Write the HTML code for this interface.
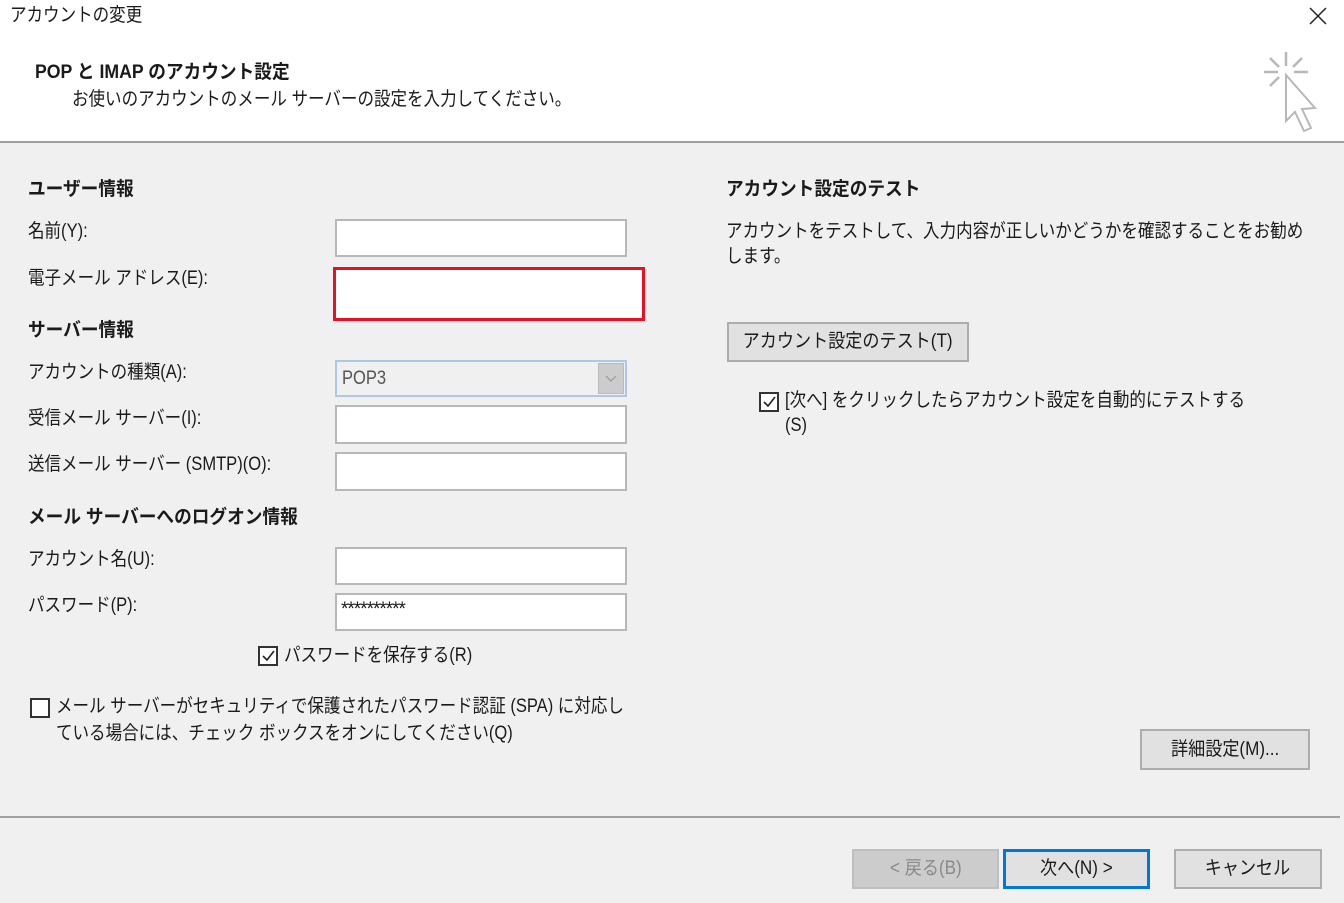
<!DOCTYPE html><html><head><meta charset="utf-8"><style>
body{margin:0;width:1344px;height:903px;background:#f0f0f0;position:relative;overflow:hidden;font-family:"Liberation Sans","Noto Sans CJK JP",sans-serif;color:#1a1a1a;font-size:19px}
.a{position:absolute;white-space:nowrap;line-height:24px;transform:scaleX(0.87);transform-origin:0 0}
.b{font-weight:bold;transform:scaleX(0.93)}
.in{position:absolute;background:#fff;border:2px solid #b8b8b8;box-sizing:border-box;left:335px;width:292px}
.btn{position:absolute;background:#e1e1e1;border:2px solid #adadad;box-sizing:border-box;text-align:center;font-size:19px}
.btn span{display:inline-block;transform:scaleX(0.9)}
.cb{position:absolute;width:20px;height:20px;border:2px solid #333;box-sizing:border-box;background:#fff}
</style></head><body>
<div style="position:absolute;left:0;top:0;width:1344px;height:141px;background:#fff"></div>
<div style="position:absolute;left:0;top:141px;width:1344px;height:2px;background:#a0a0a0"></div>
<div class="a" style="left:10px;top:4px">アカウントの変更</div>
<svg style="position:absolute;left:1309px;top:7px" width="18" height="18" stroke="#222" stroke-width="1.5"><path d="M1 1L17 17M17 1L1 17"/></svg>
<div class="a b" style="left:35px;top:61px">POP と IMAP のアカウント設定</div>
<div class="a" style="left:72px;top:88px">お使いのアカウントのメール サーバーの設定を入力してください。</div>
<svg style="position:absolute;left:1260px;top:50px" width="64" height="90" viewBox="0 0 64 90" fill="none" stroke="#b8b8b8" stroke-width="2.5"><path d="M26 2v14M4 22h14M34 22h14M10 8l9 9M42 8l-9 9M10 36l9-9"/><path d="M26 25v46l9-9 9 19 7-3-9-19 13-1z" stroke-width="2"/></svg>
<div class="a b" style="left:28px;top:178px">ユーザー情報</div>
<div class="a" style="left:28px;top:220px">名前(Y):</div>
<div class="a" style="left:28px;top:267px">電子メール アドレス(E):</div>
<div class="a b" style="left:28px;top:319px">サーバー情報</div>
<div class="a" style="left:28px;top:361px">アカウントの種類(A):</div>
<div class="a" style="left:28px;top:407px">受信メール サーバー(I):</div>
<div class="a" style="left:28px;top:453px">送信メール サーバー (SMTP)(O):</div>
<div class="a b" style="left:28px;top:506px">メール サーバーへのログオン情報</div>
<div class="a" style="left:28px;top:548px">アカウント名(U):</div>
<div class="a" style="left:28px;top:594px">パスワード(P):</div>
<div class="in" style="top:219px;height:38px"></div>
<div style="position:absolute;left:333px;top:267px;width:312px;height:54px;border:3px solid #e81123;box-sizing:border-box;background:#fff"></div>
<div class="in" style="top:360px;height:37px;background:#f0f0f0;border-color:#adc8e6"><span class="a" style="left:5px;top:5px;color:#555">POP3</span><div style="position:absolute;right:1px;top:1px;width:26px;height:31px;background:#ccc;border:1px solid #bbb;box-sizing:border-box"><svg width="24" height="29"><path d="M7 12l5 5 5-5" fill="none" stroke="#999" stroke-width="1.2"/></svg></div></div>
<div class="in" style="top:405px;height:39px"></div>
<div class="in" style="top:452px;height:39px"></div>
<div class="in" style="top:547px;height:38px"></div>
<div class="in" style="top:593px;height:38px"><span class="a" style="left:4px;top:3px;font-size:19px;transform:none;letter-spacing:-1px">**********</span></div>
<div class="cb" style="left:258px;top:646px"><svg width="16" height="16" style="position:absolute;left:0;top:0"><path d="M3 8l4 4 7-9" fill="none" stroke="#222" stroke-width="1.6"/></svg></div>
<div class="a" style="left:284px;top:644px">パスワードを保存する(R)</div>
<div class="cb" style="left:30px;top:698px"></div>
<div class="a" style="left:56px;top:695px">メール サーバーがセキュリティで保護されたパスワード認証 (SPA) に対応し</div>
<div class="a" style="left:56px;top:722px">ている場合には、チェック ボックスをオンにしてください(Q)</div>
<div class="a b" style="left:726px;top:178px">アカウント設定のテスト</div>
<div class="a" style="left:726px;top:220px">アカウントをテストして、入力内容が正しいかどうかを確認することをお勧め</div>
<div class="a" style="left:726px;top:245px">します。</div>
<div class="btn" style="left:727px;top:322px;width:242px;height:40px;line-height:36px"><span>アカウント設定のテスト(T)</span></div>
<div class="cb" style="left:759px;top:392px"><svg width="16" height="16" style="position:absolute;left:0;top:0"><path d="M3 8l4 4 7-9" fill="none" stroke="#222" stroke-width="1.6"/></svg></div>
<div class="a" style="left:785px;top:389px">[次へ] をクリックしたらアカウント設定を自動的にテストする</div>
<div class="a" style="left:785px;top:414px">(S)</div>
<div class="btn" style="left:1140px;top:729px;width:170px;height:41px;line-height:37px"><span>詳細設定(M)...</span></div>
<div style="position:absolute;left:0;top:816px;width:1340px;height:2px;background:#a0a0a0"></div>
<div class="btn" style="left:852px;top:849px;width:147px;height:40px;line-height:36px;background:#cccccc;border-color:#bfbfbf;color:#8a8a8a"><span>&lt; 戻る(B)</span></div>
<div class="btn" style="left:1003px;top:849px;width:147px;height:40px;line-height:34px;border:3px solid #0078d7"><span>次へ(N) &gt;</span></div>
<div class="btn" style="left:1174px;top:849px;width:148px;height:40px;line-height:36px"><span>キャンセル</span></div>
</body></html>
